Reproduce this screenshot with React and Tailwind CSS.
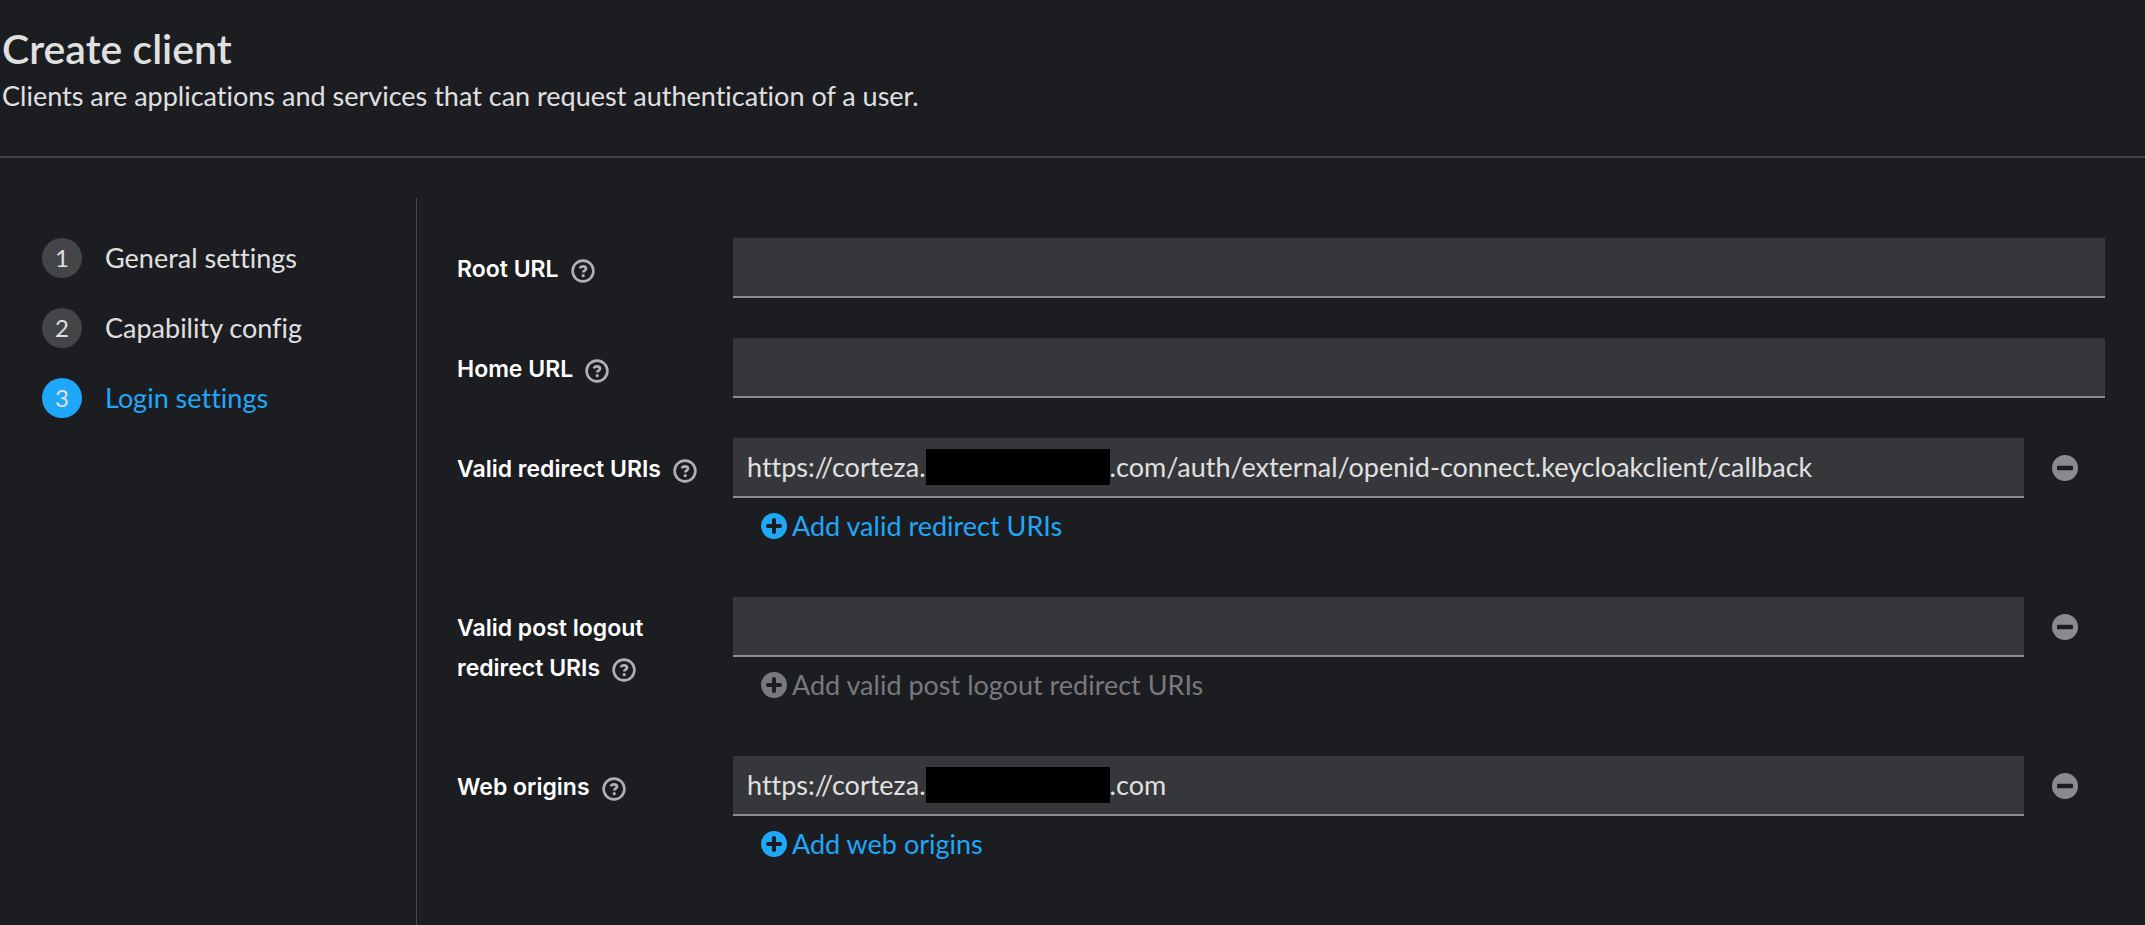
import React from 'react';
import clsx from 'clsx';

const steps = [
  { id: 1, name: 'General settings' },
  { id: 2, name: 'Capability config' },
  { id: 3, name: 'Login settings' },
];

const HelpIcon = () => (
  <svg viewBox="0 0 24 24" className="size-6" fill="none" stroke="currentColor" aria-hidden="true">
    <circle cx="12" cy="12" r="10.4" strokeWidth="2.6" />
    <path d="M8.9 9.4c.4-1.300 1.500-2.100 3-2.100 1.800 0 3.100.9 3.100 2.400 0 1.900-2.700 2-2.700 3.700" strokeWidth="2.700" />
    <circle cx="12.200" cy="16.700" r="1.600" fill="currentColor" stroke="none" />
  </svg>
);

const PlusIcon = () => (
  <svg viewBox="0 0 26 26" className="size-[26px]" aria-hidden="true">
    <circle cx="13" cy="13" r="13" fill="currentColor" />
    <path d="M13 7v12M7 13h12" stroke="#1b1d21" strokeWidth="4" strokeLinecap="round" />
  </svg>
);

const MinusIcon = () => (
  <svg viewBox="0 0 26 26" className="size-[26px]" aria-hidden="true">
    <circle cx="13" cy="13" r="13" fill="currentColor" />
    <rect x="5" y="10.700" width="16" height="4.600" rx="1" fill="#1b1d21" />
  </svg>
);

const Field = ({ id, label, children }) => (
  <div className="flex">
    <div className="w-[276px] shrink-0 pt-[11px] pr-8 font-['Inter'] text-[23px]/10 font-semibold text-white">
      <label htmlFor={id}>{label}</label>
      <button
        type="button"
        aria-label={`Help for ${label}`}
        className="ml-3 inline-flex align-middle text-[#b0b1b3]"
      >
        <HelpIcon />
      </button>
    </div>
    <div className="min-w-0 flex-1">{children}</div>
  </div>
);

const boxClass = 'block h-[60px] w-full min-w-0 border-b-2 border-[#8a8d90] bg-[#36373a] px-3.5 outline-none';

const UriField = ({ id, label, value, addLabel, disabled }) => (
  <Field id={id} label={label}>
    <div className="flex items-center">
      {value ? (
        <div className={clsx(boxClass, 'flex! flex-1 items-center')}>
          <input
            id={id}
            defaultValue={value[0]}
            className="field-sizing-content outline-none"
          />
          <span className="h-9 w-[184px] shrink-0 bg-black" />
          <input
            aria-label={`${label} domain and path`}
            defaultValue={value[1]}
            className="min-w-0 flex-1 outline-none"
          />
        </div>
      ) : (
        <input id={id} className={clsx(boxClass, 'flex-1')} />
      )}
      <button
        type="button"
        aria-label={`Remove ${label}`}
        className="flex w-[81px] shrink-0 justify-center text-[#8a8b8d]"
      >
        <MinusIcon />
      </button>
    </div>
    <button
      type="button"
      disabled={disabled}
      className={clsx(
        'mt-1.5 mb-[9px] flex h-11 items-center gap-[5px] pl-7',
        disabled ? 'text-[#77797c]' : 'text-[#1fa7f8]'
      )}
    >
      <PlusIcon />
      {addLabel}
    </button>
  </Field>
);

const App = () => {
  return (
    <div className="flex min-h-screen flex-col bg-[#1b1d21] font-['Lato',sans-serif] text-[27px]/9 text-[#e0e0e0] [font-variant-ligatures:none]">
      <header className="border-b-2 border-[#444548] px-0.5 pt-6 pb-[42px]">
        <h1 className="text-[41px]/[50px] font-semibold">Create client</h1>
        <p className="pt-1">Clients are applications and services that can request authentication of a user.</p>
      </header>

      <div className="flex flex-1 pt-10">
        <nav className="w-[417px] shrink-0 border-r border-[#444548] pt-10 pl-[42px]">
          <ol className="flex flex-col gap-[30px]">
            {steps.map((step) => (
              <li key={step.id}>
                <button
                  type="button"
                  className={clsx('flex h-10 items-center gap-[23px]', step.id === 3 && 'text-[#1fa7f8]')}
                >
                  <span
                    className={clsx(
                      'flex size-10 items-center justify-center rounded-full text-[24px] text-[#e0e0e0]',
                      step.id === 3 ? 'bg-[#1fa7f8]' : 'bg-[#444548]'
                    )}
                  >
                    {step.id}
                  </span>
                  {step.name}
                </button>
              </li>
            ))}
          </ol>
        </nav>

        <form className="flex min-w-0 flex-1 flex-col gap-10 px-10 pt-10">
          <Field id="root-url" label="Root URL">
            <input id="root-url" className={boxClass} />
          </Field>
          <Field id="home-url" label="Home URL">
            <input id="home-url" className={boxClass} />
          </Field>
          <UriField
            id="redirect-uris"
            label="Valid redirect URIs"
            value={['https://corteza.', '.com/auth/external/openid-connect.keycloakclient/callback']}
            addLabel="Add valid redirect URIs"
          />
          <UriField
            id="logout-uris"
            label="Valid post logout redirect URIs"
            addLabel="Add valid post logout redirect URIs"
            disabled
          />
          <UriField
            id="web-origins"
            label="Web origins"
            value={['https://corteza.', '.com']}
            addLabel="Add web origins"
          />
        </form>
      </div>
    </div>
  );
};

export default App;
